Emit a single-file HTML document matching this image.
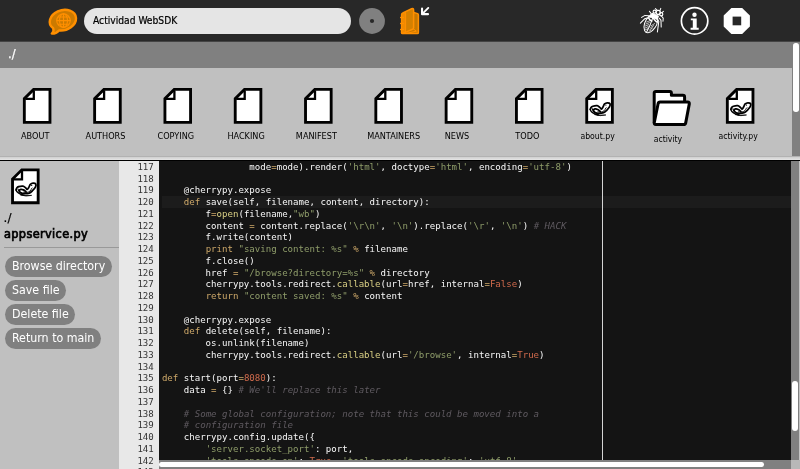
<!DOCTYPE html>
<html><head><meta charset="utf-8"><title>Actividad WebSDK</title>
<style>
html,body{margin:0;padding:0;}
#root{left:0;top:0;width:800px;height:469px;will-change:transform;}
body{width:800px;height:469px;overflow:hidden;position:relative;background:#c0c0c0;font-family:"DejaVu Sans Condensed","DejaVu Sans","Liberation Sans",sans-serif;font-stretch:condensed;}
div{position:absolute;box-sizing:border-box;}
#tb{left:0;top:0;width:800px;height:42px;background:#282828;border-bottom:1px solid #444;}
#entry{left:84px;top:8px;width:267px;height:25.5px;border-radius:13px;background:#e5e5e5;color:#000;font-size:10.2px;line-height:25.5px;padding-left:9px;white-space:nowrap;-webkit-text-stroke:0.2px #000;}
#pathbar{left:0;top:42px;width:800px;height:25.6px;background:#808080;color:#fff;font-family:"DejaVu Sans","Liberation Sans",sans-serif;font-stretch:normal;font-size:11.5px;line-height:25.4px;padding-left:8px;-webkit-text-stroke:0.25px #fff;}
#files{left:0;top:67.6px;width:791px;height:89px;background:#c0c0c0;}
#sb1{left:791.5px;top:42px;width:8.5px;height:114px;background:#808080;}
#sb1 i{position:absolute;left:1.6px;top:0.6px;width:5.5px;height:69px;border-radius:2.75px;background:#fff;}
#sep{left:0;top:155.7px;width:800px;height:5.1px;background:linear-gradient(180deg,#b2b2b2 0,#b2b2b2 0.8px,#cecece 0.8px,#e2e2e2 3.7px,#000 3.7px,#000 5.1px);}
.ic{width:40px;height:38px;}
.ic svg{position:absolute;left:0;top:0;}
.fl{width:100px;text-align:center;font-size:9.05px;line-height:11px;color:#000;white-space:nowrap;}

#side{left:0;top:161px;width:119px;height:308px;background:#c0c0c0;}
#sicon{left:11px;top:168.2px;width:30px;height:38px;}
#sdir{left:3.6px;top:211px;font-family:"DejaVu Sans","Liberation Sans",sans-serif;font-stretch:normal;font-size:12px;line-height:14px;color:#000;-webkit-text-stroke:0.2px #000;}
#sname{left:4px;top:225.5px;font-size:12.6px;line-height:16px;font-weight:normal;-webkit-text-stroke:0.7px #000;letter-spacing:0.36px;color:#000;white-space:nowrap;}
#shr{left:4px;top:247px;width:115px;height:1px;background:#999;}
.btn{left:5.4px;height:21px;border-radius:10.5px;background:#808080;color:#fff;font-size:12.3px;line-height:20.6px;padding:0 6.6px 0 6.6px;margin-top:-0.4px;white-space:nowrap;}
#gut{left:119.4px;top:160.8px;width:39.6px;height:308.2px;background:#e8e8e8;overflow:hidden;}
.gl{position:relative;height:11.75px;line-height:11.75px;font-family:"DejaVu Sans Mono","Liberation Mono",monospace;font-stretch:normal;font-size:9.08px;color:#333;text-align:right;padding-right:5.2px;}
#ed{left:159px;top:160.8px;width:632px;height:300px;background:#141414;overflow:hidden;}
#ed2{left:159px;top:160.8px;width:632px;height:300px;overflow:hidden;}
.cl{position:relative;height:11.75px;line-height:11.75px;font-family:"DejaVu Sans Mono","Liberation Mono",monospace;font-stretch:normal;font-size:9.08px;color:#f8f8f8;white-space:pre;padding-left:2.9px;}
#act{left:162px;top:196px;width:629px;height:11.75px;background:#1c1c1c;}
#gtxt{left:0;top:1.2px;width:39.6px;}
#ctxt{left:0;top:1.2px;width:632px;}
.k{color:#cda869}.s{color:#8f9d6a}.c{color:#5f5a60;font-style:italic}.n{color:#cf6a4c}.f{color:#dad085}
#pm{left:602px;top:161px;width:1px;height:299px;background:#d4d4d4;}
#sbv{left:790.5px;top:160.8px;width:9.5px;height:299px;background:linear-gradient(90deg,#808080 0,#808080 8.2px,#c4c4c4 8.2px);}
#sbv i{position:absolute;left:1.5px;top:220.6px;width:5.8px;height:49.4px;border-radius:3px;background:#fff;}
#sbh{left:159px;top:459.6px;width:632px;height:9.4px;background:#808080;}
#sbh i{position:absolute;left:-0.2px;top:2.6px;width:604.7px;height:5px;border-radius:2.5px;background:#fff;}
#corner{left:790.5px;top:460px;width:9.5px;height:9px;background:#b8b8b8;}
#gutb{left:119px;top:460px;width:40px;height:9px;background:#e8e8e8;overflow:hidden;}
svg{position:absolute;overflow:visible;}
</style></head><body><div id="root">
<div id="tb">
 <svg style="left:0;top:0" width="800" height="42" viewBox="0 0 800 42">
  <g transform="translate(46 6)"><path d="M13 24.4 A13.4 10 -17 1 0 7.2 22.3 Q8.3 25.6 5.8 27.6 Q10.5 27.6 13 24.4 Z" fill="#cc7a00" stroke="#ff8f00" stroke-width="2.4" stroke-linejoin="round"/><g fill="none" stroke="#ff8f00" stroke-width="1.1"><circle cx="17.5" cy="14.6" r="6.8"/><ellipse cx="17.5" cy="14.6" rx="4" ry="6.8"/><path d="M17.5 7.8 V21.4 M10.7 14.6 H24.3 M11.8 11 H23.2 M11.8 18.2 H23.2"/></g></g>
  <circle cx="372" cy="21" r="12.9" fill="#808080"/><circle cx="372" cy="21" r="2.1" fill="#282828"/>
  <g stroke-linejoin="round" stroke-linecap="round">
   <path d="M406 13.4 L414.4 12.6 L417.6 13.6 Q418.4 14 418.4 15 V32.4 Q418.4 33.5 417.4 33.5 H402.6 Q401.6 33.5 401.6 32.4 Z" fill="#c87800" stroke="#ff8f00" stroke-width="1.5"/>
   <path d="M401.6 32.6 V14.6 Q401.6 13.4 402.8 12.9 L411.6 8.8 Q413.6 8 413.6 10 V27.8 Q413.6 28.8 412.6 29.3 L403 33.4 Z" fill="#d58000" stroke="#ff8f00" stroke-width="1.5"/>
   <path d="M402 14 L405.6 12.4 V32 L402 33.2 Z" fill="#f08a00" stroke="#ff8f00" stroke-width="1"/>
   <path d="M413.4 29 L416.4 31.2 L407 33.2" fill="none" stroke="#ff8f00" stroke-width="1"/>
   <path d="M400.6 17.5 H403.4 M400.6 23.5 H403.4 M400.6 29.5 H403.4" stroke="#ff8f00" stroke-width="1.3"/>
  </g>
  <path d="M422.05 8.6 V14.15 H428" fill="none" stroke="#fff" stroke-width="2.1" stroke-linecap="round" stroke-linejoin="round"/><path d="M428.3 7.9 L422.6 13.6" stroke="#fff" stroke-width="1.9" stroke-linecap="round"/>
  <g fill="none" stroke="#fff" stroke-width="1.05" stroke-linecap="round" stroke-linejoin="round">
   <path d="M648.4 17 C645 20 642.8 26.5 644.6 30.6 C646 33.8 649.6 33.4 652.6 30.4 C656 27 658 22.6 657.4 19.4"/>
   <path d="M648.4 17 L652.4 13.2 L658.4 16.2 L657.4 19.4 L652.8 17.6 Z" fill="#fff"/>
   <path d="M652.8 17.6 C651.4 22 649 28 646.6 32"/>
   <path d="M652.8 17.6 C655 20.6 656 21.6 657 22" stroke-width="1.6"/>
   <path d="M648.6 18.2 C649.6 20 651 21 652 21" stroke-width="1.4"/>
   <g stroke-width="0.7"><path d="M646.6 22 L649.8 20.8 M645.8 24 L649.4 22.6 M645.4 26 L648.8 24.6 M645.2 28 L648.2 26.6 M645.4 29.8 L647.6 28.8 M651.4 25.6 L654.6 23.6 M650.6 27.6 L653.8 25.6 M649.8 29.6 L652.6 27.8 M649 31.4 L651 30"/></g>
   <circle cx="658.2" cy="12.4" r="2.1" stroke-width="1.3"/><circle cx="661.2" cy="14.2" r="1.6" stroke-width="1.2"/><circle cx="654.6" cy="11.6" r="1.5" stroke-width="1.1"/>
   <path d="M657.4 10.4 L655.4 8.6 M659.8 10.8 L660.8 8.4 M662 12.6 L663.4 11.4"/>
   <path d="M648.8 15.8 L645 15.4 L641.6 17.4 M647 18 L644.6 18.8 L640.4 23.2 M651 13.4 L649.4 11.2"/>
   <path d="M657.8 19.6 L658.8 21.4 L657.4 32 M659.4 18.2 L661 20.4 L661.2 27 M661.4 16 L663.2 18.2 L663 21.2"/>
  </g>
  <circle cx="694.6" cy="20.9" r="13.2" fill="none" stroke="#fff" stroke-width="1.7"/><circle cx="694.5" cy="14.8" r="2.2" fill="#fff"/>
  <path d="M690.8 18.4 H696.7 V27.7 H698.7 V29.7 H690.6 V27.7 H692.8 V20.2 H690.8 Z" fill="#fff"/>
  <path d="M731.4 7.9 H742.2 L749.9 15.6 V26.4 L742.2 34.1 H731.4 L723.7 26.4 V15.6 Z" fill="#fff"/><rect x="732.6" y="16.6" width="8.6" height="8.7" fill="#282828"/>
 </svg>
 <div id="entry">Actividad WebSDK</div>
</div>
<div id="pathbar">./</div>
<div id="files"></div>
<div class="fl" style="left:-14.8px;top:130.6px">ABOUT</div>
<div class="fl" style="left:55.5px;top:130.6px">AUTHORS</div>
<div class="fl" style="left:125.8px;top:130.6px">COPYING</div>
<div class="fl" style="left:196.1px;top:130.6px">HACKING</div>
<div class="fl" style="left:266.4px;top:130.6px">MANIFEST</div>
<div class="fl" style="left:367.2px;top:130.6px;text-align:left">MANTAINERS</div>
<div class="fl" style="left:407px;top:130.6px">NEWS</div>
<div class="fl" style="left:477.3px;top:130.6px">TODO</div>
<div class="fl" style="left:547.6px;top:130.6px;font-size:8.6px">about.py</div>
<div class="fl" style="left:617.9px;top:134.3px;font-size:8.6px">activity</div>
<div class="fl" style="left:688.2px;top:130.6px;font-size:8.6px">activity.py</div>
<div id="sb1"><i></i></div>
<div id="sep"></div>
<div id="side"></div>
<div id="sdir">./</div>
<div id="sname">appservice.py</div>
<div id="shr"></div>
<div class="btn" style="top:256px">Browse directory</div>
<div class="btn" style="top:280px">Save file</div>
<div class="btn" style="top:304px">Delete file</div>
<div class="btn" style="top:328px">Return to main</div>
<div id="gut"><div id="gtxt">
<div class="gl">117</div>
<div class="gl">118</div>
<div class="gl">119</div>
<div class="gl">120</div>
<div class="gl">121</div>
<div class="gl">122</div>
<div class="gl">123</div>
<div class="gl">124</div>
<div class="gl">125</div>
<div class="gl">126</div>
<div class="gl">127</div>
<div class="gl">128</div>
<div class="gl">129</div>
<div class="gl">130</div>
<div class="gl">131</div>
<div class="gl">132</div>
<div class="gl">133</div>
<div class="gl">134</div>
<div class="gl">135</div>
<div class="gl">136</div>
<div class="gl">137</div>
<div class="gl">138</div>
<div class="gl">139</div>
<div class="gl">140</div>
<div class="gl">141</div>
<div class="gl">142</div>
<div class="gl">143</div>
</div></div>
<div id="ed"></div>
<div id="act"></div>
<div id="ed2"><div id="ctxt">
<div class="cl">                mode<span class="k">=</span>mode).render(<span class="s">&#x27;html&#x27;</span>, doctype<span class="k">=</span><span class="s">&#x27;html&#x27;</span>, encoding<span class="k">=</span><span class="s">&#x27;utf-8&#x27;</span>)</div>
<div class="cl">&nbsp;</div>
<div class="cl">    @cherrypy.expose</div>
<div class="cl">    <span class="k">def</span> save(self, filename, content, directory):</div>
<div class="cl">        f<span class="k">=</span><span class="f">open</span>(filename,<span class="s">&quot;wb&quot;</span>)</div>
<div class="cl">        content <span class="k">=</span> content.replace(<span class="s">&#x27;\r\n&#x27;</span>, <span class="s">&#x27;\n&#x27;</span>).replace(<span class="s">&#x27;\r&#x27;</span>, <span class="s">&#x27;\n&#x27;</span>) <span class="c"># HACK</span></div>
<div class="cl">        f.write(content)</div>
<div class="cl">        <span class="k">print</span> <span class="s">&quot;saving content: %s&quot;</span> <span class="k">%</span> filename</div>
<div class="cl">        f.close()</div>
<div class="cl">        href <span class="k">=</span> <span class="s">&quot;/browse?directory=%s&quot;</span> <span class="k">%</span> directory</div>
<div class="cl">        cherrypy.tools.redirect.<span class="f">callable</span>(url<span class="k">=</span>href, internal<span class="k">=</span><span class="n">False</span>)</div>
<div class="cl">        <span class="k">return</span> <span class="s">&quot;content saved: %s&quot;</span> <span class="k">%</span> content</div>
<div class="cl">&nbsp;</div>
<div class="cl">    @cherrypy.expose</div>
<div class="cl">    <span class="k">def</span> delete(self, filename):</div>
<div class="cl">        os.unlink(filename)</div>
<div class="cl">        cherrypy.tools.redirect.<span class="f">callable</span>(url<span class="k">=</span><span class="s">&#x27;/browse&#x27;</span>, internal<span class="k">=</span><span class="n">True</span>)</div>
<div class="cl">&nbsp;</div>
<div class="cl"><span class="k">def</span> start(port<span class="k">=</span><span class="n">8080</span>):</div>
<div class="cl">    data <span class="k">=</span> {} <span class="c"># We&#x27;ll replace this later</span></div>
<div class="cl">&nbsp;</div>
<div class="cl">    <span class="c"># Some global configuration; note that this could be moved into a</span></div>
<div class="cl">    <span class="c"># configuration file</span></div>
<div class="cl">    cherrypy.config.update({</div>
<div class="cl">        <span class="s">&#x27;server.socket_port&#x27;</span>: port,</div>
<div class="cl">        <span class="s">&#x27;tools.encode.on&#x27;</span>: <span class="n">True</span>, <span class="s">&#x27;tools.encode.encoding&#x27;</span>: <span class="s">&#x27;utf-8&#x27;</span>,</div>
<div class="cl">        <span class="s">&#x27;tools.decode.on&#x27;</span>: <span class="n">True</span>,</div>
</div></div>
<div id="pm"></div>
<div id="sbv"><i></i></div>
<div id="sbh"><i></i></div>
<div id="corner"></div>
<svg style="left:0;top:0" width="800" height="469" viewBox="0 0 800 469">
<g transform="translate(22.90 88.00)"><g><path d="M10.7 1.43 H27.07 V34.37 H1.43 V10.7 Z" fill="#fff" stroke="#000" stroke-width="2.86" stroke-linejoin="miter"/><path d="M10.9 2.4 V10.9 H2.4" fill="none" stroke="#000" stroke-width="2.3"/></g></g>
<g transform="translate(93.20 88.00)"><g><path d="M10.7 1.43 H27.07 V34.37 H1.43 V10.7 Z" fill="#fff" stroke="#000" stroke-width="2.86" stroke-linejoin="miter"/><path d="M10.9 2.4 V10.9 H2.4" fill="none" stroke="#000" stroke-width="2.3"/></g></g>
<g transform="translate(163.50 88.00)"><g><path d="M10.7 1.43 H27.07 V34.37 H1.43 V10.7 Z" fill="#fff" stroke="#000" stroke-width="2.86" stroke-linejoin="miter"/><path d="M10.9 2.4 V10.9 H2.4" fill="none" stroke="#000" stroke-width="2.3"/></g></g>
<g transform="translate(233.80 88.00)"><g><path d="M10.7 1.43 H27.07 V34.37 H1.43 V10.7 Z" fill="#fff" stroke="#000" stroke-width="2.86" stroke-linejoin="miter"/><path d="M10.9 2.4 V10.9 H2.4" fill="none" stroke="#000" stroke-width="2.3"/></g></g>
<g transform="translate(304.10 88.00)"><g><path d="M10.7 1.43 H27.07 V34.37 H1.43 V10.7 Z" fill="#fff" stroke="#000" stroke-width="2.86" stroke-linejoin="miter"/><path d="M10.9 2.4 V10.9 H2.4" fill="none" stroke="#000" stroke-width="2.3"/></g></g>
<g transform="translate(374.40 88.00)"><g><path d="M10.7 1.43 H27.07 V34.37 H1.43 V10.7 Z" fill="#fff" stroke="#000" stroke-width="2.86" stroke-linejoin="miter"/><path d="M10.9 2.4 V10.9 H2.4" fill="none" stroke="#000" stroke-width="2.3"/></g></g>
<g transform="translate(444.70 88.00)"><g><path d="M10.7 1.43 H27.07 V34.37 H1.43 V10.7 Z" fill="#fff" stroke="#000" stroke-width="2.86" stroke-linejoin="miter"/><path d="M10.9 2.4 V10.9 H2.4" fill="none" stroke="#000" stroke-width="2.3"/></g></g>
<g transform="translate(515.00 88.00)"><g><path d="M10.7 1.43 H27.07 V34.37 H1.43 V10.7 Z" fill="#fff" stroke="#000" stroke-width="2.86" stroke-linejoin="miter"/><path d="M10.9 2.4 V10.9 H2.4" fill="none" stroke="#000" stroke-width="2.3"/></g></g>
<g transform="translate(585.30 88.00)"><g><path d="M10.7 1.43 H27.07 V34.37 H1.43 V10.7 Z" fill="#fff" stroke="#000" stroke-width="2.86" stroke-linejoin="miter"/><path d="M10.9 2.4 V10.9 H2.4" fill="none" stroke="#000" stroke-width="2.3"/><g fill="none" stroke="#000" stroke-linecap="round" stroke-linejoin="round"><path d="M4.97 21.47 C5.09 21.16 5.24 20.13 5.67 19.60 C6.09 19.07 6.51 18.58 7.53 18.27 C8.56 17.96 10.64 17.56 11.80 17.73 C12.96 17.91 13.74 18.77 14.47 19.33 C15.20 19.89 15.64 21.14 16.17 21.09 C16.71 21.05 17.15 19.92 17.67 19.07 C18.18 18.21 18.56 16.68 19.27 15.97 C19.98 15.26 21.03 14.84 21.93 14.80 C22.84 14.76 24.33 15.07 24.71 15.76 C25.08 16.45 24.72 17.88 24.17 18.96 C23.62 20.04 22.40 21.32 21.40 22.27 C20.40 23.22 19.53 24.16 18.20 24.67 C16.87 25.17 14.82 25.35 13.40 25.31 C11.98 25.26 10.53 24.89 9.67 24.40 C8.80 23.91 8.23 22.95 8.23 22.37 C8.23 21.80 8.98 21.08 9.67 20.93 C10.35 20.78 11.44 21.05 12.33 21.47 C13.22 21.88 14.56 23.11 15.00 23.44" stroke-width="1.75"/><path d="M4.97 21.47 C5.13 21.80 5.28 22.76 5.93 23.44 C6.58 24.12 7.71 25.02 8.87 25.57 C10.02 26.12 12.20 26.55 12.87 26.75" stroke-width="1.4"/><path d="M7.00 20.77 C7.13 21.11 7.22 22.11 7.80 22.80 C8.38 23.49 10.02 24.58 10.47 24.93" stroke-width="1.1"/><path d="M20.44 20.13 C20.20 20.54 19.77 21.93 19.00 22.59 C18.23 23.24 16.87 23.88 15.80 24.08 C14.73 24.28 13.13 23.81 12.60 23.76" stroke-width="0.9"/><path d="M9.67 26.64 Q15.00 28.61 20.60 26.96 Q15.00 27.41 9.67 26.64 Z" fill="#000" stroke-width="0.7"/></g><circle cx="20.60" cy="17.04" r="0.6" fill="#000"/><circle cx="21.29" cy="19.39" r="0.4" fill="#000"/></g></g>
<g transform="translate(652.70 89.90)"><g><path d="M1.5 33 V3.2 Q1.5 1.5 3.2 1.5 H17 Q18.7 1.5 18.7 3.2 V5.4 H30.2 Q31.9 5.4 31.9 7.1 V13" fill="#fff" stroke="#000" stroke-width="3" stroke-linejoin="round"/><path d="M3.2 34.6 Q1.2 34.6 1.6 32.6 L5.4 13.8 Q5.7 12.2 7.4 12.2 H35 Q36.9 12.2 36.6 14 L33 33 Q32.7 34.6 31 34.6 Z" fill="#fff" stroke="#000" stroke-width="3" stroke-linejoin="round"/></g></g>
<g transform="translate(725.90 88.00)"><g><path d="M10.7 1.43 H27.07 V34.37 H1.43 V10.7 Z" fill="#fff" stroke="#000" stroke-width="2.86" stroke-linejoin="miter"/><path d="M10.9 2.4 V10.9 H2.4" fill="none" stroke="#000" stroke-width="2.3"/><g fill="none" stroke="#000" stroke-linecap="round" stroke-linejoin="round"><path d="M4.97 21.47 C5.09 21.16 5.24 20.13 5.67 19.60 C6.09 19.07 6.51 18.58 7.53 18.27 C8.56 17.96 10.64 17.56 11.80 17.73 C12.96 17.91 13.74 18.77 14.47 19.33 C15.20 19.89 15.64 21.14 16.17 21.09 C16.71 21.05 17.15 19.92 17.67 19.07 C18.18 18.21 18.56 16.68 19.27 15.97 C19.98 15.26 21.03 14.84 21.93 14.80 C22.84 14.76 24.33 15.07 24.71 15.76 C25.08 16.45 24.72 17.88 24.17 18.96 C23.62 20.04 22.40 21.32 21.40 22.27 C20.40 23.22 19.53 24.16 18.20 24.67 C16.87 25.17 14.82 25.35 13.40 25.31 C11.98 25.26 10.53 24.89 9.67 24.40 C8.80 23.91 8.23 22.95 8.23 22.37 C8.23 21.80 8.98 21.08 9.67 20.93 C10.35 20.78 11.44 21.05 12.33 21.47 C13.22 21.88 14.56 23.11 15.00 23.44" stroke-width="1.75"/><path d="M4.97 21.47 C5.13 21.80 5.28 22.76 5.93 23.44 C6.58 24.12 7.71 25.02 8.87 25.57 C10.02 26.12 12.20 26.55 12.87 26.75" stroke-width="1.4"/><path d="M7.00 20.77 C7.13 21.11 7.22 22.11 7.80 22.80 C8.38 23.49 10.02 24.58 10.47 24.93" stroke-width="1.1"/><path d="M20.44 20.13 C20.20 20.54 19.77 21.93 19.00 22.59 C18.23 23.24 16.87 23.88 15.80 24.08 C14.73 24.28 13.13 23.81 12.60 23.76" stroke-width="0.9"/><path d="M9.67 26.64 Q15.00 28.61 20.60 26.96 Q15.00 27.41 9.67 26.64 Z" fill="#000" stroke-width="0.7"/></g><circle cx="20.60" cy="17.04" r="0.6" fill="#000"/><circle cx="21.29" cy="19.39" r="0.4" fill="#000"/></g></g>
<g transform="translate(11.1 168.4)"><g><path d="M10.7 1.43 H27.07 V34.37 H1.43 V10.7 Z" fill="#fff" stroke="#000" stroke-width="2.86" stroke-linejoin="miter"/><path d="M10.9 2.4 V10.9 H2.4" fill="none" stroke="#000" stroke-width="2.3"/><g fill="none" stroke="#000" stroke-linecap="round" stroke-linejoin="round"><path d="M4.97 21.47 C5.09 21.16 5.24 20.13 5.67 19.60 C6.09 19.07 6.51 18.58 7.53 18.27 C8.56 17.96 10.64 17.56 11.80 17.73 C12.96 17.91 13.74 18.77 14.47 19.33 C15.20 19.89 15.64 21.14 16.17 21.09 C16.71 21.05 17.15 19.92 17.67 19.07 C18.18 18.21 18.56 16.68 19.27 15.97 C19.98 15.26 21.03 14.84 21.93 14.80 C22.84 14.76 24.33 15.07 24.71 15.76 C25.08 16.45 24.72 17.88 24.17 18.96 C23.62 20.04 22.40 21.32 21.40 22.27 C20.40 23.22 19.53 24.16 18.20 24.67 C16.87 25.17 14.82 25.35 13.40 25.31 C11.98 25.26 10.53 24.89 9.67 24.40 C8.80 23.91 8.23 22.95 8.23 22.37 C8.23 21.80 8.98 21.08 9.67 20.93 C10.35 20.78 11.44 21.05 12.33 21.47 C13.22 21.88 14.56 23.11 15.00 23.44" stroke-width="1.75"/><path d="M4.97 21.47 C5.13 21.80 5.28 22.76 5.93 23.44 C6.58 24.12 7.71 25.02 8.87 25.57 C10.02 26.12 12.20 26.55 12.87 26.75" stroke-width="1.4"/><path d="M7.00 20.77 C7.13 21.11 7.22 22.11 7.80 22.80 C8.38 23.49 10.02 24.58 10.47 24.93" stroke-width="1.1"/><path d="M20.44 20.13 C20.20 20.54 19.77 21.93 19.00 22.59 C18.23 23.24 16.87 23.88 15.80 24.08 C14.73 24.28 13.13 23.81 12.60 23.76" stroke-width="0.9"/><path d="M9.67 26.64 Q15.00 28.61 20.60 26.96 Q15.00 27.41 9.67 26.64 Z" fill="#000" stroke-width="0.7"/></g><circle cx="20.60" cy="17.04" r="0.6" fill="#000"/><circle cx="21.29" cy="19.39" r="0.4" fill="#000"/></g></g>
</svg>
</div></body></html>
